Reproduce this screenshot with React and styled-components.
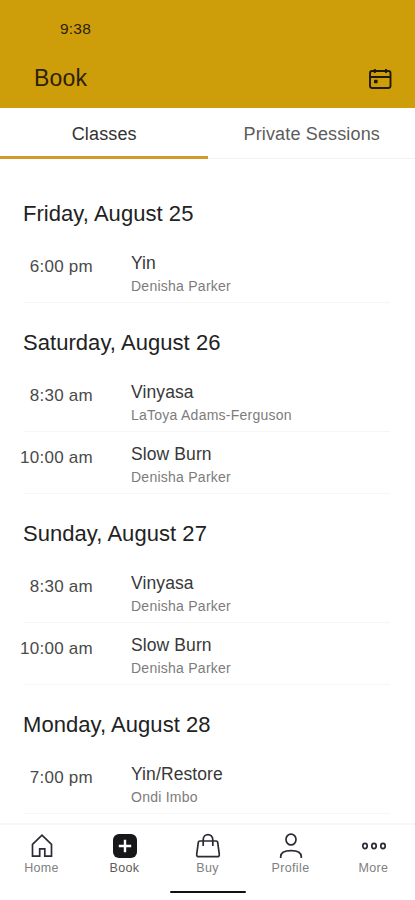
import React, { useState } from 'react';
import styled, { createGlobalStyle } from 'styled-components';

const GlobalStyle = createGlobalStyle`
  * {
    box-sizing: border-box;
  }

  body {
    margin: 0;
    background: #fff;
    font-family: 'Liberation Sans', Arial, sans-serif;
  }

  button {
    margin: 0;
    padding: 0;
    border: 0;
    background: none;
    font: inherit;
    cursor: pointer;
  }
`;

const days = [
  {
    title: 'Friday, August 25',
    classes: [{ time: '6:00 pm', name: 'Yin', teacher: 'Denisha Parker' }],
  },
  {
    title: 'Saturday, August 26',
    classes: [
      { time: '8:30 am', name: 'Vinyasa', teacher: 'LaToya Adams-Ferguson' },
      { time: '10:00 am', name: 'Slow Burn', teacher: 'Denisha Parker' },
    ],
  },
  {
    title: 'Sunday, August 27',
    classes: [
      { time: '8:30 am', name: 'Vinyasa', teacher: 'Denisha Parker' },
      { time: '10:00 am', name: 'Slow Burn', teacher: 'Denisha Parker' },
    ],
  },
  {
    title: 'Monday, August 28',
    classes: [{ time: '7:00 pm', name: 'Yin/Restore', teacher: 'Ondi Imbo' }],
  },
];

const Screen = styled.div`
  display: flex;
  flex-direction: column;
  height: 900px;
  overflow: hidden;
`;

const Header = styled.header`
  flex: none;
  height: 108px;
  background: #ce9d0a;
  color: #2b2208;
`;

const StatusBar = styled.div`
  height: 56px;
  padding-left: 60px;
  font-size: 15.5px;
  line-height: 57px;
  letter-spacing: 0.2px;
`;

const TitleBar = styled.div`
  display: flex;
  align-items: center;
  justify-content: space-between;
  height: 45px;
  padding: 0 23px 0 34px;
`;

const Title = styled.h1`
  margin: 0;
  font-size: 23px;
  font-weight: 400;
  letter-spacing: 0.2px;
`;

const CalendarButton = styled.button`
  display: flex;
  color: #211a06;
`;

const Tabs = styled.div`
  display: flex;
  flex: none;
  height: 52px;
`;

const Tab = styled.button`
  display: flex;
  flex: 1;
  flex-direction: column;
  justify-content: flex-end;
  padding-left: 1px;
  color: ${(p) => (p.$active ? '#333' : '#5c5c5c')};
  font-size: 18px;
  line-height: 44px;
  letter-spacing: 0.15px;
  text-align: center;

  &::after {
    content: '';
    height: ${(p) => (p.$active ? '3px' : '1px')};
    margin: ${(p) => (p.$active ? '0 0 1px -1px' : '2px 0 1px -1px')};
    background: ${(p) => (p.$active ? '#d09a2c' : '#f3f3f3')};
  }
`;

const Schedule = styled.main`
  flex: 1;
  min-height: 0;
  padding: 14px 25px 0 23px;
  overflow: hidden;
`;

const DayTitle = styled.h2`
  height: 67px;
  margin: 0;
  padding-top: 27px;
  color: #222;
  font-size: 22px;
  font-weight: 400;
  line-height: 26px;
  letter-spacing: 0.05px;
`;

const Row = styled.div`
  display: flex;
  height: 62px;
  border-bottom: 1px solid #f6f6f6;
`;

const Time = styled.div`
  display: flex;
  flex: none;
  justify-content: flex-end;
  width: 70px;
  margin: 16px 38px 0 0;
  color: #4a4a4a;
  font-size: 17px;
  line-height: 20px;
  letter-spacing: 0.25px;
  white-space: nowrap;
`;

const ClassName = styled.div`
  margin-top: 12px;
  color: #383838;
  font-size: 17.5px;
  line-height: 20px;
  letter-spacing: 0.1px;
`;

const Teacher = styled.div`
  margin-top: 5px;
  color: #7c7c7c;
  font-size: 14px;
  line-height: 16px;
  letter-spacing: 0.25px;
`;

const BottomNav = styled.nav`
  display: flex;
  flex: none;
  height: 77px;
  border-top: 2px solid #f7f7f7;
`;

const NavItem = styled.button`
  display: flex;
  flex: 1;
  flex-direction: column;
  align-items: center;
  padding-top: 7px;
  color: ${(p) => (p.$active ? '#5c5c5c' : '#808080')};
  font-size: 12.5px;
  line-height: 17px;
  letter-spacing: 0.35px;
`;

const NavIcon = styled.svg`
  width: 28px;
  height: 28px;
  fill: none;
  stroke: #2a2b34;
  stroke-width: 1.7;
`;

const HomeIndicator = styled.div`
  position: fixed;
  bottom: 7px;
  left: 170px;
  width: 76px;
  height: 2px;
  border-radius: 1px;
  background: #111;
`;

const CalendarIcon = () => (
  <svg width="24" height="24" viewBox="0 0 24 24" fill="none" stroke="currentColor">
    <rect x="2" y="4" width="20.5" height="17" rx="2.2" strokeWidth="1.9" />
    <path d="M2 10h20M6.8 2v4M18 2v4" strokeWidth="1.9" />
    <rect x="6" y="12.8" width="3.6" height="3.4" rx="0.8" fill="currentColor" stroke="none" />
  </svg>
);

const HomeIcon = () => (
  <NavIcon viewBox="0 0 28 28">
    <path d="M4.5 12.4 14 3.2l9.5 9.2v11.8h-6.700v-7.400h-5.100v7.400H4.500z" />
  </NavIcon>
);

const BookIcon = () => (
  <NavIcon viewBox="0 0 28 28">
    <rect x="2" y="2" width="24" height="24" rx="6" fill="#17171a" stroke="none" />
    <path d="M14 7.8v12.4M7.8 14h12.4" stroke="#fff" strokeWidth="2.4" />
  </NavIcon>
);

const BuyIcon = () => (
  <NavIcon viewBox="0 0 28 28">
    <path d="M4.400 10q.2-1 1.300-1h16.600q1.100 0 1.300 1l1.700 12.200q.3 2.500-2.200 2.500H4.900q-2.500 0-2.200-2.500z" />
    <path d="M9.2 14V7.800c0-6.800 9.600-6.800 9.600 0V14" />
  </NavIcon>
);

const ProfileIcon = () => (
  <NavIcon viewBox="0 0 28 28">
    <ellipse cx="14" cy="7.5" rx="5" ry="5.4" />
    <path d="M3.700 26v-1.300c0-4 4-6.100 10.300-6.100s10.300 2.100 10.300 6.100V26" />
  </NavIcon>
);

const MoreIcon = () => (
  <NavIcon viewBox="0 0 28 28">
    <ellipse cx="5" cy="14" rx="2.2" ry="2.6" />
    <ellipse cx="14" cy="14" rx="2.2" ry="2.6" />
    <ellipse cx="23" cy="14" rx="2.2" ry="2.6" />
  </NavIcon>
);

const navItems = [
  { label: 'Home', Icon: HomeIcon },
  { label: 'Book', Icon: BookIcon },
  { label: 'Buy', Icon: BuyIcon },
  { label: 'Profile', Icon: ProfileIcon },
  { label: 'More', Icon: MoreIcon },
];

const Day = ({ day }) => (
  <section>
    <DayTitle>{day.title}</DayTitle>
    {day.classes.map((c) => (
      <Row key={c.time}>
        <Time>{c.time}</Time>
        <div>
          <ClassName>{c.name}</ClassName>
          <Teacher>{c.teacher}</Teacher>
        </div>
      </Row>
    ))}
  </section>
);

const App = () => {
  const [tab, setTab] = useState('Classes');

  return (
    <Screen>
      <GlobalStyle />
      <Header>
        <StatusBar>9:38</StatusBar>
        <TitleBar>
          <Title>Book</Title>
          <CalendarButton aria-label="Calendar">
            <CalendarIcon />
          </CalendarButton>
        </TitleBar>
      </Header>
      <Tabs>
        {['Classes', 'Private Sessions'].map((name) => (
          <Tab key={name} $active={name === tab} onClick={() => setTab(name)}>
            {name}
          </Tab>
        ))}
      </Tabs>
      <Schedule>
        {days.map((day) => (
          <Day key={day.title} day={day} />
        ))}
      </Schedule>
      <BottomNav>
        {navItems.map(({ label, Icon }) => (
          <NavItem key={label} $active={label === 'Book'}>
            <Icon />
            {label}
          </NavItem>
        ))}
      </BottomNav>
      <HomeIndicator />
    </Screen>
  );
};

export default App;
